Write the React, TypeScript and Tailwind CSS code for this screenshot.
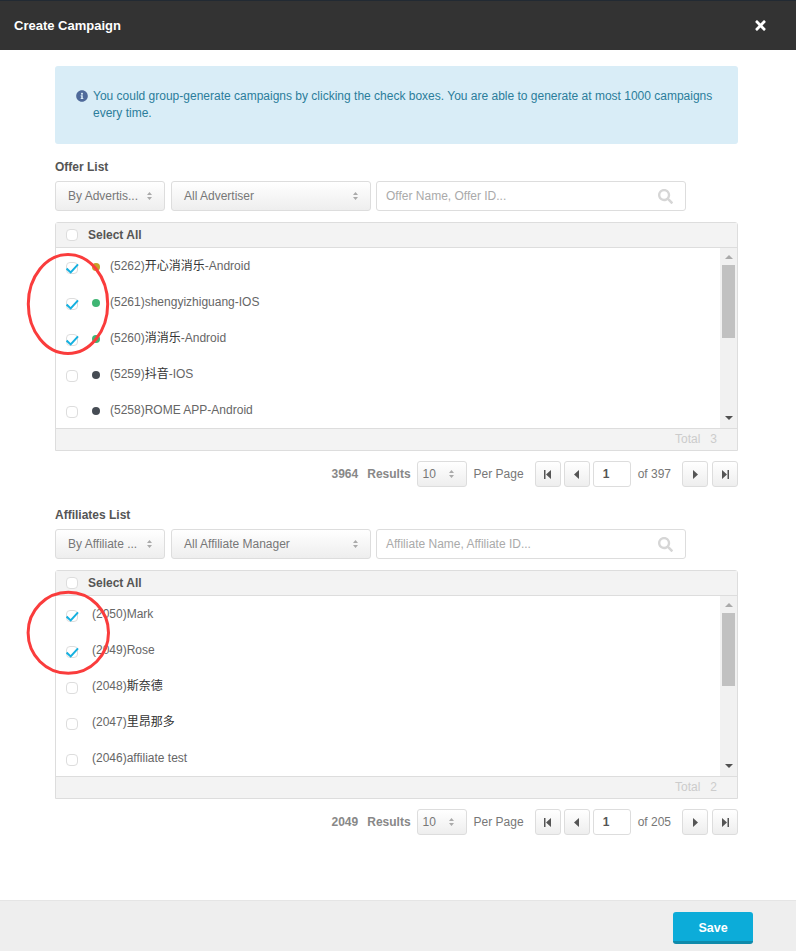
import React from "react";
import { FaInfoCircle, FaSearch, FaTimes } from "react-icons/fa";

const CJK = "font-['Liberation_Sans','Noto_Sans_CJK_SC',sans-serif]";

type Row = { label: string; dot?: string; checked?: boolean };

const offers: Row[] = [
  { label: "(5262)开心消消乐-Android", dot: "bg-[#c4a22a]", checked: true },
  { label: "(5261)shengyizhiguang-IOS", dot: "bg-[#3fb573]", checked: true },
  { label: "(5260)消消乐-Android", dot: "bg-[#3fb573]", checked: true },
  { label: "(5259)抖音-IOS", dot: "bg-[#464c54]" },
  { label: "(5258)ROME APP-Android", dot: "bg-[#464c54]" },
];

const affiliates: Row[] = [
  { label: "(2050)Mark", checked: true },
  { label: "(2049)Rose", checked: true },
  { label: "(2048)斯奈德" },
  { label: "(2047)里昂那多" },
  { label: "(2046)affiliate test" },
];

// chinese glyphs come out darker than the latin text next to them
function Label({ text }: { text: string }) {
  const parts = text.split(/([\u4e00-\u9fff]+)/);
  return (
    <>
      {parts.map((p, i) =>
        i % 2 === 1 ? (
          <span key={i} className="text-[#333]">
            {p}
          </span>
        ) : (
          p
        )
      )}
    </>
  );
}

function Sort() {
  return (
    <svg width="5" height="8" viewBox="0 0 5 8" className="shrink-0">
      <path d="M2.5 0L5 3H0Z M2.5 8L0 5H5Z" fill="#aaa" />
    </svg>
  );
}

function Check({ on, className }: { on?: boolean; className?: string }) {
  return (
    <span className={`relative block h-3 w-3 shrink-0 rounded-sm border border-[#ddd] bg-white ${className ?? ""}`}>
      {on && (
        <svg width="13" height="11" viewBox="0 0 13 11" className="absolute -left-px top-0">
          <path d="M0.6 5.6L4.7 9.4L12 1.3" fill="none" stroke="#14b0e0" strokeWidth="2" />
        </svg>
      )}
    </span>
  );
}

function Select({ label, width }: { label: string; width: string }) {
  return (
    <div className={`flex h-[30px] items-center justify-between rounded-[3px] border border-[#ddd] bg-gradient-to-b from-white to-[#eee] pl-3 pr-3 text-xs text-[#777] ${width}`}>
      <span>{label}</span>
      <Sort />
    </div>
  );
}

function PageBtn({ d }: { d: string }) {
  return (
    <span className="flex h-[26px] w-[26px] items-center justify-center rounded-[3px] border border-[#ddd] bg-gradient-to-b from-white to-[#eee]">
      <svg width="7" height="9" viewBox="0 0 7 9">
        <path d={d} fill="#555" />
      </svg>
    </span>
  );
}

function ListBlock(props: {
  title: string;
  selectA: string;
  selectB: string;
  placeholder: string;
  rows: Row[];
  total: number;
  results: number;
  pages: number;
}) {
  const hasDot = props.rows[0].dot !== undefined;
  return (
    <section>
      <div className="text-xs font-bold leading-[14px] text-[#555]">{props.title}</div>
      <div className="mt-[7px] flex gap-[6px]">
        <Select label={props.selectA} width="w-[110px]" />
        <Select label={props.selectB} width="w-[200px]" />
        <div className="-ml-px flex h-[30px] w-[310px] items-center justify-between rounded-[3px] border border-[#ddd] bg-white pl-[9px] pr-3 text-xs text-[#aaa]">
          <span>{props.placeholder}</span>
          <FaSearch size={15} className="text-[#d6d6d6]" />
        </div>
      </div>

      <div className="mt-[11px] rounded-t-[3px] border border-[#ddd]">
        <div className="flex h-[25px] items-center border-b border-[#ddd] bg-[#f3f3f3] pl-[10px] text-xs font-bold text-[#555]">
          <Check />
          <span className="ml-[10px]">Select All</span>
        </div>
        <div className="flex h-[180px]">
          <div className="flex-1 bg-white">
            {props.rows.map((r) => (
              <div key={r.label} className="flex h-9 items-center pl-[10px]">
                <Check on={r.checked} className="mt-1" />
                {hasDot && <span className={`ml-[14px] mt-0.5 h-2 w-2 rounded-full ${r.dot}`} />}
                <span className={`${hasDot ? "ml-[10px]" : "ml-[14px]"} text-xs text-[#666] ${CJK}`}>
                  <Label text={r.label} />
                </span>
              </div>
            ))}
          </div>
          <div className="flex w-[17px] flex-col items-center bg-[#f1f1f1]">
            <svg width="8" height="4" viewBox="0 0 8 4" className="mt-[7px]">
              <path d="M4 0L8 4H0Z" fill="#aaa" />
            </svg>
            <div className="mt-[6px] h-[73px] w-[13px] bg-[#c1c1c1]" />
            <svg width="8" height="4" viewBox="0 0 8 4" className="mb-2 mt-auto">
              <path d="M0 0H8L4 4Z" fill="#505050" />
            </svg>
          </div>
        </div>
        <div className="flex h-[22px] items-center justify-end border-t border-[#ddd] bg-[#f3f3f3] pb-0.5 pr-[20px] text-xs text-[#ccc]">
          <span>Total</span>
          <span className="ml-[10px]">{props.total}</span>
        </div>
      </div>

      <div className="mt-[10px] flex h-[26px] items-center justify-end text-xs text-[#777]">
        <span className="font-bold text-[#888]">{props.results}</span>
        <span className="ml-[9px] font-bold text-[#888]">Results</span>
        <div className="ml-[6px] flex h-[26px] w-[50px] items-center justify-between rounded-[3px] border border-[#ddd] bg-gradient-to-b from-white to-[#eee] pl-[5px] pr-3">
          <span>10</span>
          <Sort />
        </div>
        <span className="ml-[7px]">Per Page</span>
        <div className="ml-[11px] flex items-center gap-[3px]">
          <PageBtn d="M0 0H1.5V9H0Z M7 0V9L2 4.5Z" />
          <PageBtn d="M6 0V9L1 4.5Z" />
          <span className="flex h-[26px] w-[38px] items-center rounded-[3px] border border-[#ddd] bg-white pl-[9px] font-bold text-[#555]">1</span>
        </div>
        <span className="ml-[7px]">of {props.pages}</span>
        <div className="ml-[11px] flex items-center gap-[4px]">
          <PageBtn d="M1 0V9L6 4.5Z" />
          <PageBtn d="M7 0H5.5V9H7Z M0 0V9L5 4.5Z" />
        </div>
      </div>
    </section>
  );
}

export default function App() {
  return (
    <div className="relative flex h-[951px] w-[796px] flex-col overflow-hidden bg-white font-['Liberation_Sans',sans-serif]">
      <header className="flex h-[50px] items-center justify-between border-t border-[#222a33] bg-[#333] pl-[14px] pr-[28px]">
        <h1 className="text-[13px] font-bold text-white">Create Campaign</h1>
        <FaTimes size={15} className="text-white" />
      </header>

      <main className="flex-1 pl-[55px] pr-[58px] pt-4">
        <div className="flex h-[78px] items-start rounded-[3px] bg-[#d9edf7] pl-[21px] pr-5 pt-[22px] text-xs leading-[17px] text-[#2b7d9b]">
          <FaInfoCircle size={12} className="mr-[5px] mt-[2px] shrink-0 text-[#4f6a9a]" />
          <p>You could group-generate campaigns by clicking the check boxes. You are able to generate at most 1000 campaigns every time.</p>
        </div>

        <div className="mt-4">
          <ListBlock title="Offer List" selectA="By Advertis..." selectB="All Advertiser" placeholder="Offer Name, Offer ID..." rows={offers} total={3} results={3964} pages={397} />
        </div>
        <div className="mt-[21px]">
          <ListBlock title="Affiliates List" selectA="By Affiliate ..." selectB="All Affiliate Manager" placeholder="Affiliate Name, Affiliate ID..." rows={affiliates} total={2} results={2049} pages={205} />
        </div>
      </main>

      <footer className="flex h-[51px] items-start justify-end border-t border-[#e5e5e5] bg-[#eee] pr-[43px] pt-[11px]">
        <button className="h-8 w-20 rounded-[3px] border-b-[3px] border-[#0f8aab] bg-[#0cacd9] pt-[3px] text-[12.5px] font-bold text-white">Save</button>
      </footer>

      {/* hand-drawn annotations over the screenshot */}
      <svg width="796" height="951" className="pointer-events-none absolute left-0 top-0">
        <ellipse cx="68" cy="304" rx="39.7" ry="49.5" fill="none" stroke="#fa3c3c" strokeWidth="3" />
        <ellipse cx="68.3" cy="632.8" rx="40.2" ry="40.5" fill="none" stroke="#fa3c3c" strokeWidth="3" />
      </svg>
    </div>
  );
}
